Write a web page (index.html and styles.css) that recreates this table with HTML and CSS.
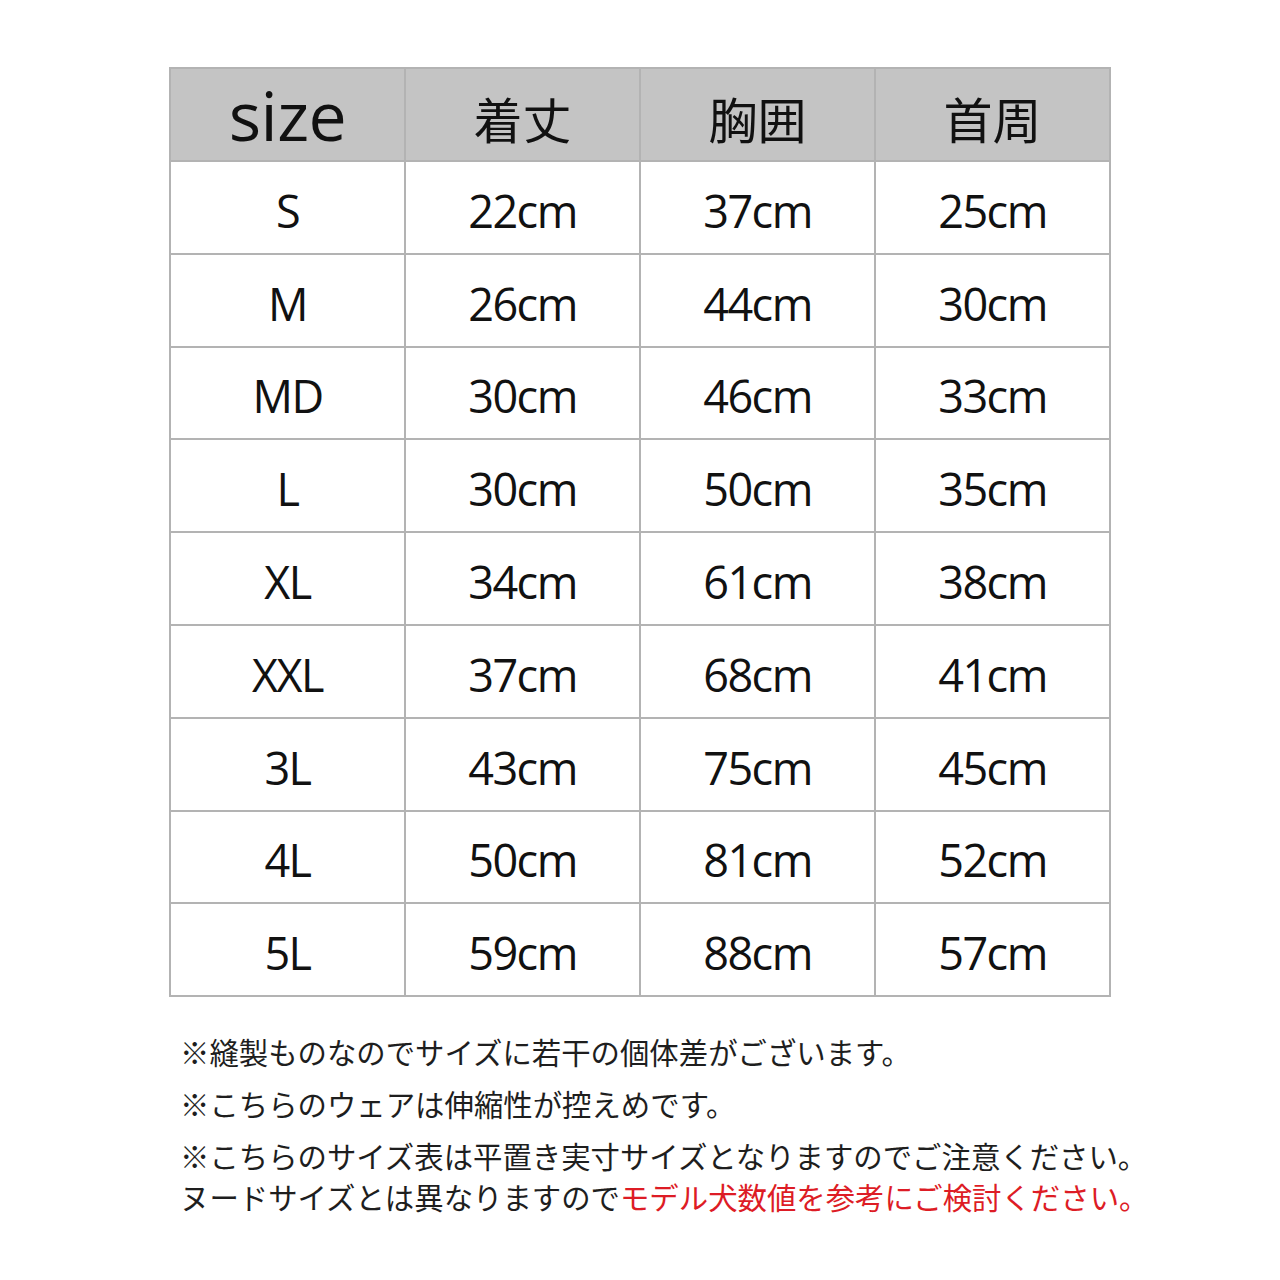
FILE: index.html
```html
<!DOCTYPE html>
<html lang="ja">
<head>
<meta charset="utf-8">
<link rel="stylesheet" href="styles.css">
</head>
<body>
<div class="page">
  <table class="size-table">
    <colgroup><col><col><col><col></colgroup>
    <thead>
      <tr>
        <th class="latin">size</th>
        <th>着丈</th>
        <th>胸囲</th>
        <th>首周</th>
      </tr>
    </thead>
    <tbody>
      <tr><td>S</td><td>22cm</td><td>37cm</td><td>25cm</td></tr>
      <tr><td>M</td><td>26cm</td><td>44cm</td><td>30cm</td></tr>
      <tr><td>MD</td><td>30cm</td><td>46cm</td><td>33cm</td></tr>
      <tr><td>L</td><td>30cm</td><td>50cm</td><td>35cm</td></tr>
      <tr><td>XL</td><td>34cm</td><td>61cm</td><td>38cm</td></tr>
      <tr><td>XXL</td><td>37cm</td><td>68cm</td><td>41cm</td></tr>
      <tr><td>3L</td><td>43cm</td><td>75cm</td><td>45cm</td></tr>
      <tr><td>4L</td><td>50cm</td><td>81cm</td><td>52cm</td></tr>
      <tr><td>5L</td><td>59cm</td><td>88cm</td><td>57cm</td></tr>
    </tbody>
  </table>
  <div class="notes">
    <p>※縫製ものなのでサイズに若干の個体差がございます。</p>
    <p>※こちらのウェアは伸縮性が控えめです。</p>
    <p>※こちらのサイズ表は平置き実寸サイズとなりますのでご注意ください。<br>ヌードサイズとは異なりますので<span class="red">モデル犬数値を参考にご検討ください。</span></p>
  </div>
</div>
</body>
</html>
```

FILE: styles.css
```css
html, body {
  margin: 0;
  padding: 0;
  background: #ffffff;
}

.page {
  padding: 67px 0 0 169px;
}

.size-table {
  border-collapse: collapse;
  table-layout: fixed;
  width: 941px;
}

.size-table col {
  width: 235px;
}

.size-table th,
.size-table td {
  border: 2px solid #b3b3b3;
  padding: 0;
  text-align: center;
  vertical-align: middle;
  color: #111111;
}

.size-table th {
  background: #c4c4c4;
  font-family: "Noto Sans CJK JP", sans-serif;
  font-weight: 400;
  font-size: 49px;
  line-height: 1;
  padding-top: 6px;
  height: 85px;
}

.size-table th.latin {
  font-family: "Open Sans", "Noto Sans", sans-serif;
  font-size: 68px;
  letter-spacing: -0.5px;
  padding-top: 0;
}

.size-table td {
  font-family: "Open Sans", "Noto Sans", sans-serif;
  font-size: 45px;
  letter-spacing: -1.5px;
  line-height: 1;
  padding-top: 6px;
  height: 84.8px;
}

.notes {
  margin-top: 34px;
  padding-left: 11px;
  font-family: "Noto Sans CJK JP", sans-serif;
  font-size: 29.4px;
  line-height: 41px;
  color: #1e1e1e;
}

.notes p {
  margin: 0 0 11px 0;
}

.red {
  color: #dd1c25;
}
```
